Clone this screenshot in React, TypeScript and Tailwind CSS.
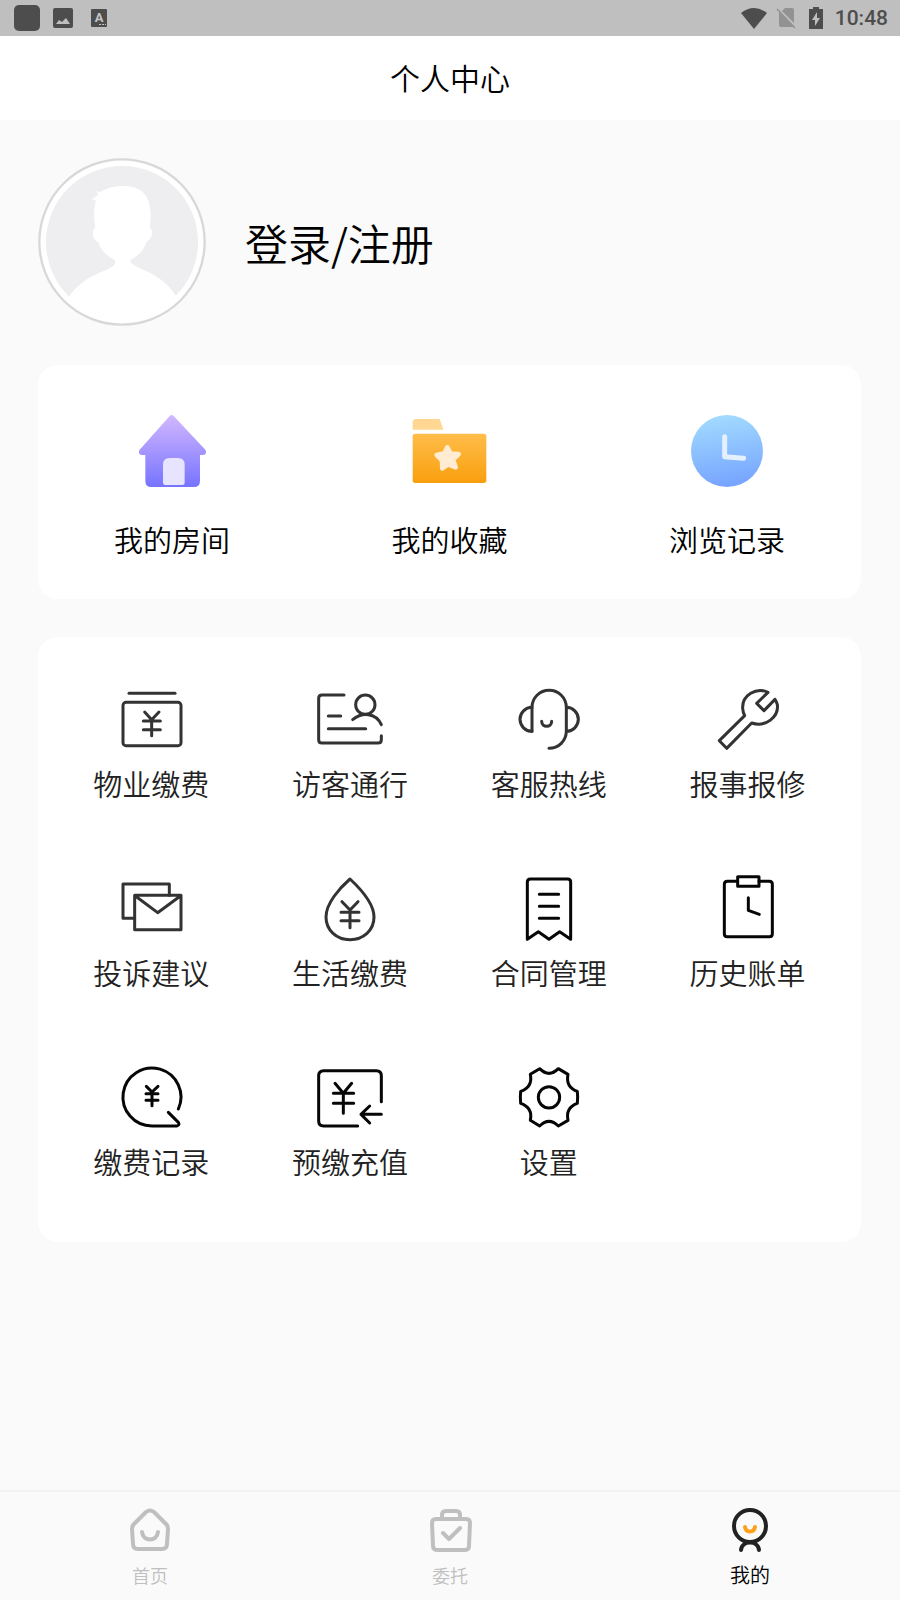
import React from 'react'

const HouseIcon = () => (
  <svg viewBox="312 159 228 228" className="w-[76px] h-[76px]" aria-hidden="true">
    <defs>
      <linearGradient id="houseFill" x1="0" y1="0" x2="0" y2="1">
        <stop offset="0" stopColor="#d3b8ff" />
        <stop offset="1" stopColor="#7673ff" />
      </linearGradient>
    </defs>
    <path
      fill="url(#houseFill)"
      d="M419 168q6-6 12 0L526 269q3 4 2 9q-1 7-9 7H510V362q0 19-19 19H364q-18 0-18-19V285H336q-8 0-9-7q-1-5 2-9Z"
    />
    <path fill="#e6e4fe" d="M399 314q0-20 20-20h25q20 0 20 20v54q0 7-7 7h-51q-7 0-7-7Z" />
  </svg>
)

const FolderIcon = () => (
  <svg viewBox="1144 159 228 228" className="w-[76px] h-[76px]" aria-hidden="true">
    <defs>
      <linearGradient id="folderFill" x1="0" y1="0" x2="0" y2="1">
        <stop offset="0" stopColor="#ffbd4a" />
        <stop offset="1" stopColor="#f99f0e" />
      </linearGradient>
    </defs>
    <path fill="#ffd792" d="M1149 187q0-10 10-10h71l11 32h-92Z" />
    <rect x="1149" y="221" width="221" height="148" rx="8" fill="url(#folderFill)" />
    <path
      fill="#ffecd2"
      stroke="#ffecd2"
      strokeWidth="14"
      strokeLinejoin="round"
      d="M1253 262l10 19 24 1-17 17 8 23-23-9-17 12-1-24-16-16 23-5Z"
    />
  </svg>
)

const ClockIcon = () => (
  <svg viewBox="746 159 228 228" className="w-[76px] h-[76px]" aria-hidden="true">
    <defs>
      <linearGradient id="clockFill" x1="0" y1="0" x2="0.15" y2="1">
        <stop offset="0" stopColor="#a5deff" />
        <stop offset="1" stopColor="#78a6ff" />
      </linearGradient>
    </defs>
    <circle cx="860" cy="273" r="108" fill="url(#clockFill)" />
    <path
      d="M853 230V290L910 295"
      fill="none"
      stroke="#e5f0ff"
      strokeWidth="15"
      strokeLinecap="round"
      strokeLinejoin="round"
    />
  </svg>
)

type LineIconProps = {
  viewBox: string
  color?: string
  children: React.ReactNode
}

const LineIcon = ({ viewBox, color = '#333333', children }: LineIconProps) => (
  <svg
    viewBox={viewBox}
    className="w-[72px] h-[72px]"
    fill="none"
    stroke={color}
    strokeWidth="9"
    strokeLinecap="round"
    strokeLinejoin="round"
    aria-hidden="true"
  >
    {children}
  </svg>
)

const shortcuts = [
  { id: 'rooms', label: '我的房间', icon: <HouseIcon /> },
  { id: 'favorites', label: '我的收藏', icon: <FolderIcon /> },
  { id: 'history', label: '浏览记录', icon: <ClockIcon /> },
]

const services = [
  {
    id: 'propertyFee',
    label: '物业缴费',
    icon: (
      <LineIcon viewBox="106 42 216 216">
        <path d="M148 70H286" />
        <rect x="130" y="97" width="174" height="130" rx="9" />
        <path d="M195 126L216 149L238 126M216 149V197M191 153H242M191 179H242" />
      </LineIcon>
    ),
  },
  {
    id: 'visitor',
    label: '访客通行',
    icon: (
      <LineIcon viewBox="703 42 216 216">
        <path d="M793 75H727Q717 75 717 85V209Q717 219 727 219H895Q905 219 905 209V197" />
        <circle cx="857" cy="104" r="29" />
        <path d="M819 149C846 127 888 126 905 164M746 138H783M746 176H858" />
      </LineIcon>
    ),
  },
  {
    id: 'hotline',
    label: '客服热线',
    icon: (
      <LineIcon viewBox="130 42 216 216">
        <path d="M187 184V112A51 51 0 0 1 290 112V184A52 51 0 0 1 238 235" />
        <path d="M187 112A36 36 0 0 0 187 184M290 112A36 36 0 0 1 290 184" />
        <path d="M216 154C216 174 246 174 246 154" />
      </LineIcon>
    ),
  },
  {
    id: 'repair',
    label: '报事报修',
    icon: (
      <LineIcon viewBox="726 42 216 216">
        <path d="M894 67C859 50 816 76 818 115Q819 127 824 137L748 212L770 235L845 159C887 173 927 140 922 104Q920 95 915 88L882 122L860 100Z" />
      </LineIcon>
    ),
  },
  {
    id: 'feedback',
    label: '投诉建议',
    icon: (
      <LineIcon viewBox="106 39 216 216">
        <path d="M165 175H130V72H269V106" />
        <path d="M165 106H304V209H165ZM167 108L234 158L302 108" />
      </LineIcon>
    ),
  },
  {
    id: 'livingFee',
    label: '生活缴费',
    icon: (
      <LineIcon viewBox="703 39 216 216">
        <path d="M811 57C840 84 883 130 883 171C883 211 851 239 811 239C771 239 739 211 739 171C739 130 780 84 811 57Z" />
        <path d="M787 125L811 150L835 125M811 150V203M784 157H838M784 182H838" />
      </LineIcon>
    ),
  },
  {
    id: 'contract',
    label: '合同管理',
    icon: (
      <LineIcon viewBox="130 39 216 216" color="#060606">
        <path d="M173 238V66Q173 57 182 57H294Q303 57 303 66V238L270 215L238 238L206 215Z" />
        <path d="M209 103H267M209 139H267M209 175H267" />
      </LineIcon>
    ),
  },
  {
    id: 'bills',
    label: '历史账单',
    icon: (
      <LineIcon viewBox="726 39 216 216" color="#060606">
        <path d="M803 64H772Q763 64 763 73V221Q763 230 772 230H898Q907 230 907 221V73Q907 64 898 64H867" />
        <path d="M803 50H867V79H803ZM835 113V151L868 163" />
      </LineIcon>
    ),
  },
  {
    id: 'payments',
    label: '缴费记录',
    icon: (
      <LineIcon viewBox="106 36 216 216" color="#060606">
        <path d="M296 177A87 87 0 1 0 217 228H291Q301 226 296 217L266 187" />
        <path d="M200 109L217 126L235 109M217 126V167M199 131H235M199 151H235" />
      </LineIcon>
    ),
  },
  {
    id: 'recharge',
    label: '预缴充值',
    icon: (
      <LineIcon viewBox="703 36 216 216" color="#060606">
        <path d="M834 228H732Q717 228 717 213V77Q717 62 732 62H890Q905 62 905 77V155" />
        <path d="M766 100L791 130L816 100M791 130V190M761 130H822M761 160H822" />
        <path d="M905 193H844M870 168L844 193L870 219" />
      </LineIcon>
    ),
  },
  {
    id: 'settings',
    label: '设置',
    icon: (
      <LineIcon viewBox="130 36 216 216" color="#060606">
        <path d="M210 56Q238 84 266 56L295 73Q287 111 323 124Q325 142 323 160Q287 173 295 211L266 228Q238 200 210 228L182 211Q190 173 153 160Q151 142 153 124Q190 111 182 73Z" />
        <circle cx="238" cy="142" r="32" />
      </LineIcon>
    ),
  },
]

const tabs = [
  {
    id: 'home',
    label: '首页',
    active: false,
    icon: (
      <>
        <path d="M20 5Q24 2 28 5L40 17Q42 19 42 22L41 37Q41 42 36 42H12Q7 42 7 37L6 22Q6 19 8 17Z" />
        <path d="M16 25C17 35 31 35 32 25" />
      </>
    ),
  },
  {
    id: 'entrust',
    label: '委托',
    active: false,
    icon: (
      <>
        <path d="M10 12H40Q44 12 44 16L43 39Q43 43 38 43H12Q7 43 7 39L6 16Q6 12 10 12Z" />
        <path d="M16 11V8Q16 4 20 4H30Q34 4 34 8V11M17 26L23 32L34 21" />
      </>
    ),
  },
  {
    id: 'mine',
    label: '我的',
    active: true,
    icon: (
      <>
        <circle cx="24" cy="19" r="16" />
        <path d="M15 43C16 33 32 33 33 43" />
        <path stroke="#ff9f1c" d="M19 20C20 26 28 26 29 20" />
      </>
    ),
  },
]

const StatusBar = () => (
  <div className="flex h-9 items-center justify-between bg-[#bfbfbf] pl-[14px] pr-3 text-[#4d4d4d]">
    <div className="flex items-center">
      <div className="h-[26px] w-[26px] rounded-[5px] bg-[#4d4d4d]" />
      <svg viewBox="0 0 20 20" className="ml-[13px] h-5 w-5" aria-hidden="true">
        <rect width="20" height="20" rx="2" fill="#4d4d4d" />
        <path fill="#bfbfbf" d="M3 16L6 12L9 14L13 10L17 16Z" />
      </svg>
      <svg viewBox="0 0 16 18" className="ml-[18px] h-[18px] w-4" aria-hidden="true">
        <rect width="16" height="18" rx="1" fill="#4d4d4d" />
        <text x="8" y="13" fontSize="13" fontWeight="700" fontFamily="Roboto, sans-serif" textAnchor="middle" fill="#c4c4c4">
          A
        </text>
        <path fill="#c4c4c4" d="M8 15h2v1H8zM11 15h2v1h-2zM14 15h1v1h-1z" />
      </svg>
    </div>
    <div className="flex items-center">
      <svg viewBox="0 0 26 21" className="h-[21px] w-[26px]" aria-hidden="true">
        <path fill="#4d4d4d" d="M0 5Q13-5 26 5L13 21Z" />
      </svg>
      <svg viewBox="0 0 20 22" className="ml-[9px] h-[22px] w-5" aria-hidden="true">
        <path fill="#929292" d="M6 4L9 1H16Q18 1 18 3V16ZM3 5V18Q3 20 5 20H18Z" />
        <path stroke="#929292" strokeWidth="1.5" d="M1 2L19 21" />
      </svg>
      <svg viewBox="0 0 14 22" className="ml-[13px] h-[22px] w-[14px]" aria-hidden="true">
        <path fill="#4d4d4d" d="M4 0H10V2H14V22H0V2H4Z" />
        <path fill="#bfbfbf" d="M8 5L3 13H6V19L11 11H8Z" />
      </svg>
      <span className="ml-3 font-[Roboto,sans-serif] text-[21px] leading-9 font-medium">10:48</span>
    </div>
  </div>
)

const Avatar = () => (
  <svg viewBox="54 54 504 504" className="h-[168px] w-[168px]" aria-hidden="true">
    <circle cx="306" cy="306" r="248" fill="#ffffff" stroke="#d8d8d8" strokeWidth="7" />
    <circle cx="306" cy="306" r="228" fill="#eeeef0" />
    <path
      fill="#ffffff"
      d="M229 152L234 165L216 177L228 183C221 205 221 235 226 264C214 268 217 299 234 305C242 331 262 348 280 358C288 362 286 372 280 378C258 396 196 402 146 470A230 230 0 0 0 468 468C430 410 385 398 354 382C330 369 327 361 334 358C358 346 374 326 380 305C397 298 401 268 389 264C393 235 393 205 386 185C374 148 343 137 305 138C278 139 254 147 240 157Z"
    />
  </svg>
)

const App = () => {
  return (
    <div className="flex min-h-screen flex-col bg-[#fafafa] font-['Noto_Sans_CJK_SC',sans-serif] font-[350] text-black">
      <StatusBar />

      <header className="flex h-21 items-center justify-center bg-white pb-0.5">
        <h1 className="text-[30px] leading-10">个人中心</h1>
      </header>

      <main className="flex-1 pr-[39px] pl-[38px]">
        <a href="#login" className="flex items-center gap-[39px] pt-[38px] pb-[39px]">
          <Avatar />
          <span className="text-[43px] leading-[60px]">登录/注册</span>
        </a>

        <section className="flex justify-between rounded-[20px] bg-white px-19 pt-12 pb-10">
          {shortcuts.map(item => (
            <a key={item.id} href={`#${item.id}`} className="flex flex-col items-center gap-[30px]">
              {item.icon}
              <span className="text-[29px] leading-10">{item.label}</span>
            </a>
          ))}
        </section>

        <section className="mt-[38px] grid grid-cols-4 gap-y-[70px] rounded-[20px] bg-white px-[14px] pt-[47px] pb-[61px]">
          {services.map(item => (
            <a key={item.id} href={`#${item.id}`} className="flex flex-col items-center gap-[7px] text-[#222222]">
              {item.icon}
              <span className="text-[29px] leading-10">{item.label}</span>
            </a>
          ))}
        </section>
      </main>

      <nav className="grid grid-cols-3 border-t-2 border-[#f2f2f2] pt-[15px] pb-[5px]">
        {tabs.map(tab => (
          <a
            key={tab.id}
            href={`#${tab.id}`}
            aria-current={tab.active ? 'page' : undefined}
            className={tab.active ? 'flex flex-col items-center text-black' : 'flex flex-col items-center text-[#bfbfbf]'}
          >
            <svg
              viewBox="0 0 48 48"
              className="h-12 w-12"
              fill="none"
              stroke={tab.active ? '#222222' : '#bfbfbf'}
              strokeWidth="4"
              strokeLinecap="round"
              strokeLinejoin="round"
              aria-hidden="true"
            >
              {tab.icon}
            </svg>
            <span className={tab.active ? 'text-[20px] leading-10' : 'text-[18px] leading-10'}>{tab.label}</span>
          </a>
        ))}
      </nav>
    </div>
  )
}

export default App
